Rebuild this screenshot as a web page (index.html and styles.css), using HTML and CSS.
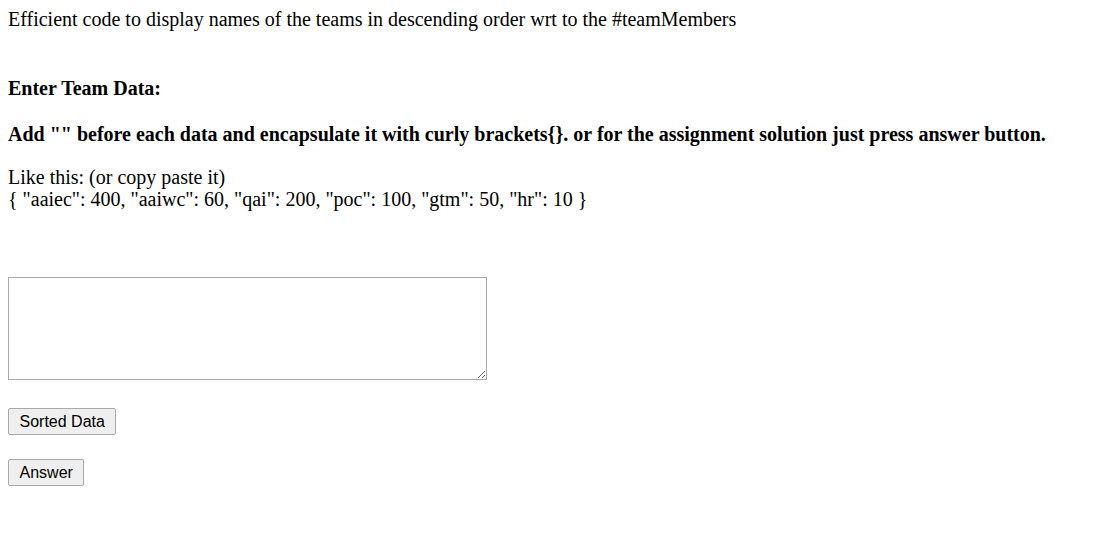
FILE: index.html
```html
<!DOCTYPE html>
<html>
<head>
<meta charset="utf-8">
<link rel="stylesheet" href="styles.css">
</head>
<body>
<div class="intro">Efficient code to display names of the teams in descending order wrt to the #teamMembers</div>
<h4 class="heading first">Enter Team Data:</h4>
<h4 class="heading">Add "" before each data and encapsulate it with curly brackets{}. or for the assignment solution just press answer button.</h4>
<div class="example">Like this: (or copy paste it)<br>{ "aaiec": 400, "aaiwc": 60, "qai": 200, "poc": 100, "gtm": 50, "hr": 10 }</div>
<textarea class="input"></textarea>
<div class="actions">
<button class="btn">Sorted Data</button>
<button class="btn">Answer</button>
</div>
</body>
</html>
```
FILE: styles.css
```css
body {
  margin: 8px;
  font-family: "Liberation Serif", "Times New Roman", serif;
  font-size: 20px;
  line-height: 23px;
  color: #000;
  background: #fff;
}
.intro { margin: 0; }
.heading { font-size: 20px; font-weight: bold; margin: 0; }
.heading.first { margin-top: 46px; }
.heading + .heading { margin-top: 23px; }
.example { margin-top: 20px; line-height: 22px; }
.input {
  display: block;
  margin-top: 67px;
  width: 479px;
  height: 103px;
  box-sizing: border-box;
  border: 1px solid #a9a9a9;
  padding: 2px;
}
.actions { display: flex; flex-direction: column; align-items: flex-start; gap: 24px; margin-top: 28px; }
.btn {
  font-family: "Liberation Sans", Arial, sans-serif;
  font-size: 16px;
  line-height: normal;
  height: 27px;
  padding: 1px 10.5px;
  background: #efefef;
  border: 1px solid #a9a9a9;
  border-radius: 2px;
  color: #000;
}
```
